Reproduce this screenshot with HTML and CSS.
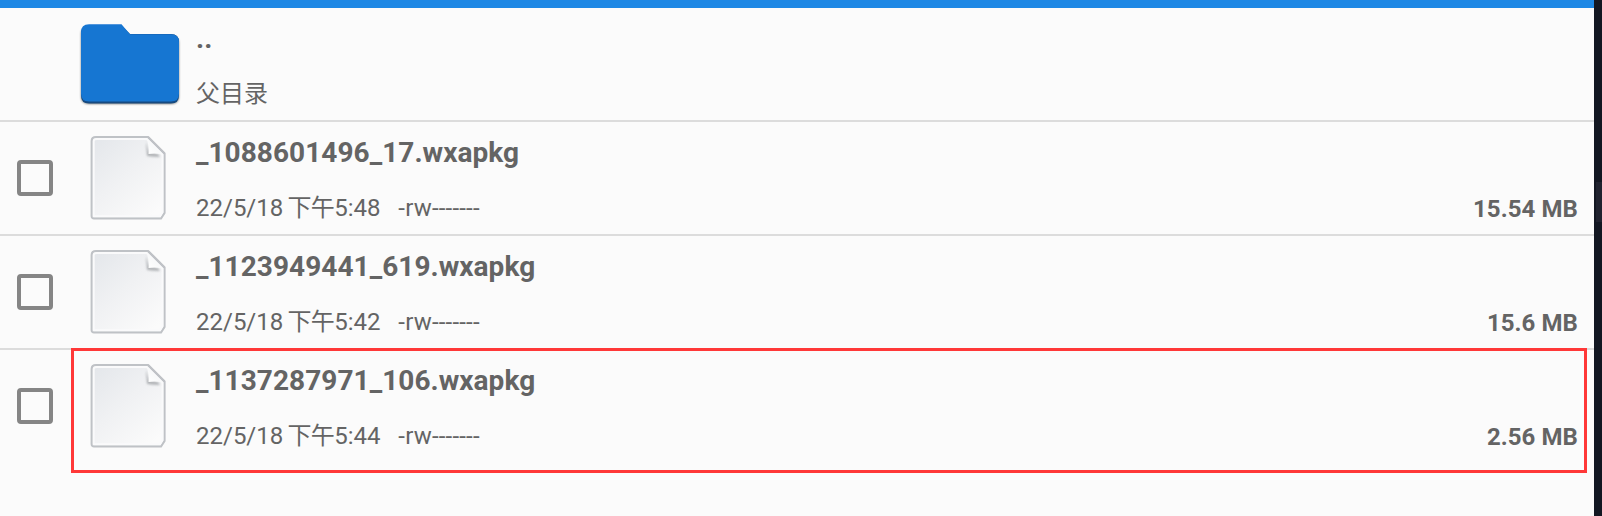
FILE: index.html
```html
<!DOCTYPE html>
<html lang="zh-CN">
<head>
<meta charset="utf-8">
<title>文件</title>
<link rel="stylesheet" href="styles.css">
</head>
<body>
<svg class="defs" width="0" height="0" aria-hidden="true">
  <defs>
    <linearGradient id="paper" x1="0" y1="0" x2="0.8" y2="1">
      <stop offset="0" stop-color="#e3e6ea"/>
      <stop offset="0.5" stop-color="#f0f1f3"/>
      <stop offset="1" stop-color="#fbfbfb"/>
    </linearGradient>
    <linearGradient id="fold" x1="0" y1="1" x2="0.6" y2="0.4">
      <stop offset="0" stop-color="#ffffff"/>
      <stop offset="1" stop-color="#f6f7f8"/>
    </linearGradient>
    <filter id="soft" x="-10%" y="-10%" width="120%" height="120%"><feGaussianBlur stdDeviation="0.5"/></filter>
    <filter id="shade" x="-30%" y="-100%" width="160%" height="300%"><feGaussianBlur stdDeviation="1.2"/></filter>
    <symbol id="file" viewBox="0 0 80 90">
      <g filter="url(#soft)">
        <path d="M6 4H58L74.500 20.500V80L71 85.300H4Q1.700 85.300 1.700 83V8Q1.700 4 6 4Z" fill="url(#paper)" stroke="#bfc2c6" stroke-width="2.2"/>
        <path d="M7 6H57L72.500 21.500V79L70 83.300H3.700V8Q3.700 6 7 6Z" fill="none" stroke="#fafafb" stroke-width="2"/>
      </g>
      <path d="M56 9L57 23Q63 24 70 24L68 21L59 19Z" fill="#a2a5a8" opacity="0.8" filter="url(#shade)"/>
      <path d="M56.500 5.500Q59.500 13 58.500 21Q66 20 72.500 21.500Z" fill="url(#fold)"/>
      <path d="M58 4L74.500 20.500" fill="none" stroke="#bfc2c6" stroke-width="2.2" filter="url(#soft)"/>
    </symbol>
  </defs>
</svg>
<div class="screen">
  <main class="panel">
    <header class="topbar"></header>
    <section class="row">
      <div class="check"></div>
      <div class="icon">
        <svg width="106" height="90" viewBox="0 0 106 90">
          <path d="M12 8H44L53 17H94Q102 17 102 25V77Q102 85 94 85H12Q4 85 4 77V16Q4 8 12 8Z" fill="#000" opacity="0.5" filter="url(#shade)"/>
          <g filter="url(#soft)">
            <path d="M12 7H45L53 15H94Q102 15 102 23V76.500Q102 84.500 94 84.500H12Q4 84.500 4 76.500V15Q4 7 12 7Z" fill="#134a80"/>
            <path d="M12 5.300H44.500L53 15.200H94Q102 15.200 102 23V74.500Q102 82.500 94 82.500H12Q4 82.500 4 74.500V13.300Q4 5.300 12 5.300Z" fill="#1976d2"/>
          </g>
        </svg>
      </div>
      <div class="info"><div class="name">..</div><div class="meta">父目录</div></div>
    </section>
    <section class="row">
      <div class="check"><span class="box"></span></div>
      <div class="icon"><svg width="80" height="90"><use href="#file"/></svg></div>
      <div class="info"><div class="name">_1088601496_17.wxapkg</div><div class="meta"><span class="date">22/5/18 </span><span class="half">下午</span>5:48 &nbsp; <span class="mode">-rw-------</span></div></div>
      <div class="size">15.54 MB</div>
    </section>
    <section class="row">
      <div class="check"><span class="box"></span></div>
      <div class="icon"><svg width="80" height="90"><use href="#file"/></svg></div>
      <div class="info"><div class="name">_1123949441_619.wxapkg</div><div class="meta"><span class="date">22/5/18 </span><span class="half">下午</span>5:42 &nbsp; <span class="mode">-rw-------</span></div></div>
      <div class="size">15.6 MB</div>
    </section>
    <section class="row last">
      <div class="check"><span class="box"></span></div>
      <div class="icon"><svg width="80" height="90"><use href="#file"/></svg></div>
      <div class="info"><div class="name">_1137287971_106.wxapkg</div><div class="meta"><span class="date">22/5/18 </span><span class="half">下午</span>5:44 &nbsp; <span class="mode">-rw-------</span></div></div>
      <div class="size">2.56 MB</div>
      <div class="highlight"></div>
    </section>
  </main>
  <aside class="edge"><div class="thumb"></div></aside>
</div>
</body>
</html>
```
FILE: styles.css
```css
* { box-sizing: border-box; }
body {
  margin: 0;
  overflow: hidden;
  background: #fbfbfb;
  color: #646464;
  font-family: Roboto, "Noto Sans CJK SC", sans-serif;
}
.defs { position: absolute; }
.screen { display: flex; height: 516px; }
.panel { flex: 1; }
.topbar { height: 8px; background: #1e88e5; }
.row {
  position: relative;
  display: flex;
  height: 114px;
  padding-right: 16px;
  border-bottom: 2px solid #dcdcdc;
}
.row.last { border-bottom-color: transparent; }
.check {
  display: flex;
  align-items: center;
  width: 70px;
  padding-left: 17px;
}
.box {
  width: 36px;
  height: 36px;
  border: 4px solid #858585;
  border-radius: 4px;
}
.icon {
  display: flex;
  justify-content: center;
  width: 120px;
  padding-top: 11px;
}
.icon svg { display: block; flex: none; }
.info { flex: 1; padding: 15px 0 0 6px; }
.name {
  height: 32px;
  line-height: 32px;
  font-size: 28px;
  font-weight: 700;
  letter-spacing: 0.05px;
}
.meta {
  height: 32px;
  margin-top: 23px;
  line-height: 32px;
  font-size: 24px;
  white-space: nowrap;
}
.date { word-spacing: -1.8px; }
.half { letter-spacing: -0.6px; }
.mode { letter-spacing: 0.2px; }
.size {
  padding-top: 71px;
  line-height: 32px;
  font-size: 24px;
  font-weight: 700;
  letter-spacing: 0.08px;
}
.highlight {
  position: absolute;
  top: -2px;
  left: 71px;
  width: 1516px;
  height: 125px;
  border: 3px solid #ff3838;
}
.edge { width: 8px; padding: 182px 0 0 2px; background: #131722; }
.thumb { height: 40px; background: #20222f; }
```
